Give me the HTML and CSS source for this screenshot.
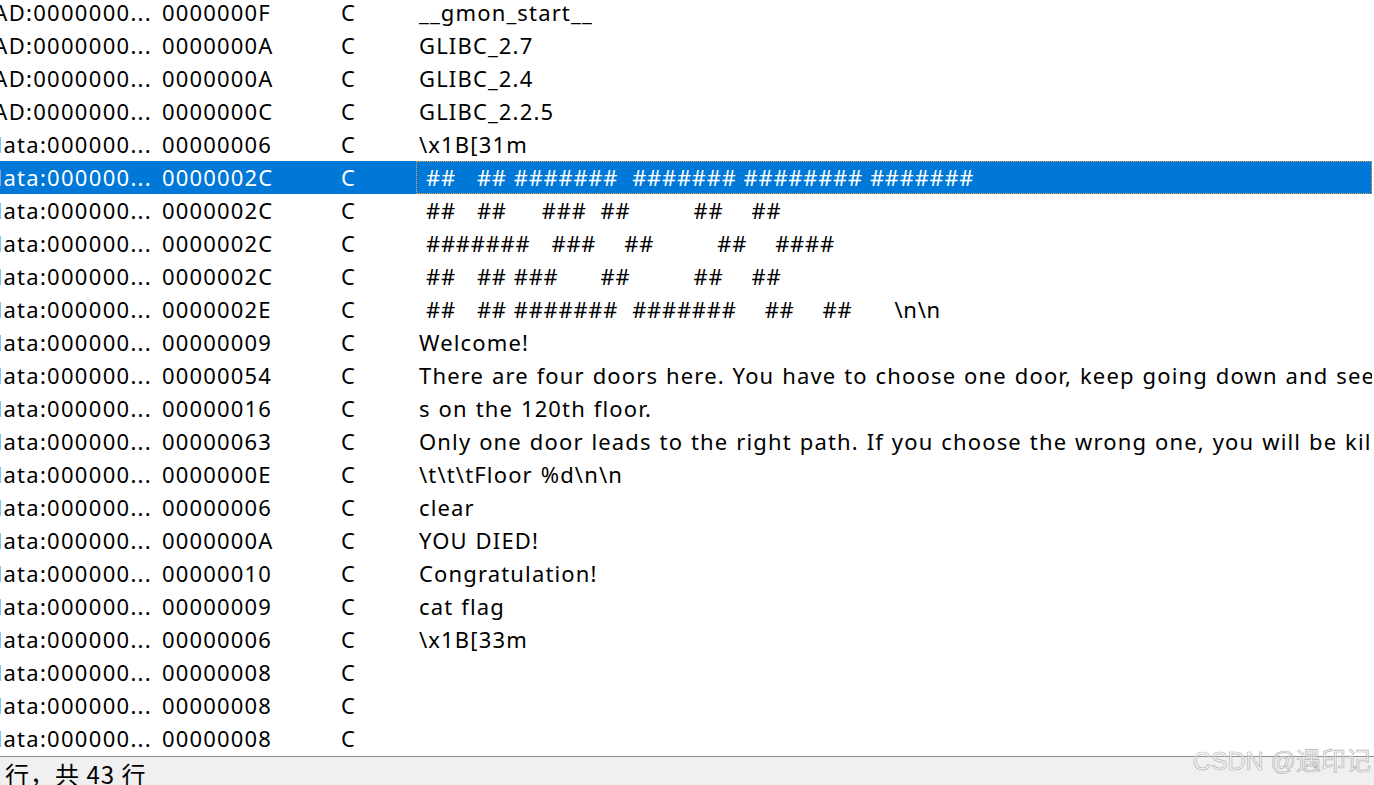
FILE: index.html
```html
<!DOCTYPE html>
<html>
<head>
<meta charset="utf-8">
<link rel="stylesheet" href="styles.css">
</head>
<body>
<div class="window">
  <div class="table">
    <div class="row"><div class="c addr"><span>LOAD:0000000...</span></div><div class="c len">0000000F</div><div class="c type">C</div><div class="c str">__gmon_start__</div></div>
    <div class="row"><div class="c addr"><span>LOAD:0000000...</span></div><div class="c len">0000000A</div><div class="c type">C</div><div class="c str">GLIBC_2.7</div></div>
    <div class="row"><div class="c addr"><span>LOAD:0000000...</span></div><div class="c len">0000000A</div><div class="c type">C</div><div class="c str">GLIBC_2.4</div></div>
    <div class="row"><div class="c addr"><span>LOAD:0000000...</span></div><div class="c len">0000000C</div><div class="c type">C</div><div class="c str">GLIBC_2.2.5</div></div>
    <div class="row"><div class="c addr"><span>.rodata:000000...</span></div><div class="c len">00000006</div><div class="c type">C</div><div class="c str">\x1B[31m</div></div>
    <div class="row selected"><div class="c addr"><span>.rodata:000000...</span></div><div class="c len">0000002C</div><div class="c type">C</div><div class="c str hash focus"> ##   ## #######  ####### ######## #######</div></div>
    <div class="row"><div class="c addr"><span>.rodata:000000...</span></div><div class="c len">0000002C</div><div class="c type">C</div><div class="c str hash"> ##   ##     ###  ##         ##    ##</div></div>
    <div class="row"><div class="c addr"><span>.rodata:000000...</span></div><div class="c len">0000002C</div><div class="c type">C</div><div class="c str hash"> #######   ###    ##         ##    ####</div></div>
    <div class="row"><div class="c addr"><span>.rodata:000000...</span></div><div class="c len">0000002C</div><div class="c type">C</div><div class="c str hash"> ##   ## ###      ##         ##    ##</div></div>
    <div class="row"><div class="c addr"><span>.rodata:000000...</span></div><div class="c len">0000002E</div><div class="c type">C</div><div class="c str hash"> ##   ## #######  #######    ##    ##      \n\n</div></div>
    <div class="row"><div class="c addr"><span>.rodata:000000...</span></div><div class="c len">00000009</div><div class="c type">C</div><div class="c str">Welcome!</div></div>
    <div class="row"><div class="c addr"><span>.rodata:000000...</span></div><div class="c len">00000054</div><div class="c type">C</div><div class="c str">There are four doors here. You have to choose one door, keep going down and see what happen</div></div>
    <div class="row"><div class="c addr"><span>.rodata:000000...</span></div><div class="c len">00000016</div><div class="c type">C</div><div class="c str">s on the 120th floor.</div></div>
    <div class="row"><div class="c addr"><span>.rodata:000000...</span></div><div class="c len">00000063</div><div class="c type">C</div><div class="c str">Only one door leads to the right path. If you choose the wrong one, you will be killed.</div></div>
    <div class="row"><div class="c addr"><span>.rodata:000000...</span></div><div class="c len">0000000E</div><div class="c type">C</div><div class="c str">\t\t\tFloor %d\n\n</div></div>
    <div class="row"><div class="c addr"><span>.rodata:000000...</span></div><div class="c len">00000006</div><div class="c type">C</div><div class="c str">clear</div></div>
    <div class="row"><div class="c addr"><span>.rodata:000000...</span></div><div class="c len">0000000A</div><div class="c type">C</div><div class="c str">YOU DIED!</div></div>
    <div class="row"><div class="c addr"><span>.rodata:000000...</span></div><div class="c len">00000010</div><div class="c type">C</div><div class="c str">Congratulation!</div></div>
    <div class="row"><div class="c addr"><span>.rodata:000000...</span></div><div class="c len">00000009</div><div class="c type">C</div><div class="c str">cat flag</div></div>
    <div class="row"><div class="c addr"><span>.rodata:000000...</span></div><div class="c len">00000006</div><div class="c type">C</div><div class="c str">\x1B[33m</div></div>
    <div class="row"><div class="c addr"><span>.rodata:000000...</span></div><div class="c len">00000008</div><div class="c type">C</div><div class="c str"></div></div>
    <div class="row"><div class="c addr"><span>.rodata:000000...</span></div><div class="c len">00000008</div><div class="c type">C</div><div class="c str"></div></div>
    <div class="row"><div class="c addr"><span>.rodata:000000...</span></div><div class="c len">00000008</div><div class="c type">C</div><div class="c str"></div></div>
  </div>
  <div class="status">行，共 43 行</div>
  <div class="watermark">CSDN @遇印记</div>
</div>
</body>
</html>
```

FILE: styles.css
```css
html, body {
  margin: 0;
  padding: 0;
  background: #ffffff;
  overflow: hidden;
}

.window {
  position: relative;
  width: 1374px;
  height: 785px;
  overflow: hidden;
  display: flex;
  flex-direction: column;
  font-family: "Noto Sans", "Open Sans", sans-serif;
  font-size: 22px;
  letter-spacing: 1.15px;
  color: #000;
}

.table {
  margin-top: -4px;
  width: 1372px;
  display: flex;
  flex-direction: column;
}

.row {
  display: grid;
  grid-template-columns: 156px 182px 78px 956px;
  height: 33px;
  line-height: 33px;
}

.c {
  white-space: pre;
  overflow: hidden;
}

.addr {
  display: flex;
  justify-content: flex-end;
  padding-right: 4px;
}

.addr span {
  letter-spacing: 1.3px;
}

.len {
  padding-left: 6px;
}

.type {
  padding-left: 3px;
}

.str {
  padding-left: 3px;
  box-sizing: border-box;
  word-spacing: 1px;
}

.str.hash {
  letter-spacing: 0.7px;
  word-spacing: 0.6px;
}

.selected {
  background: #0078d7;
  color: #ffffff;
}

.focus {
  outline: 1px dotted #f0a040;
  outline-offset: -1px;
}

.status {
  margin-top: 1px;
  flex: 1;
  border-top: 1px solid #8c8c9c;
  background: #f0f0f0;
  font-family: "Noto Sans CJK SC", "Noto Sans", sans-serif;
  font-size: 24px;
  letter-spacing: 1px;
  line-height: 30px;
  padding-left: 5px;
  padding-top: 2px;
}

.watermark {
  position: absolute;
  right: 3px;
  bottom: 8px;
  font-family: "Liberation Sans", "Noto Sans CJK SC", sans-serif;
  font-size: 25px;
  letter-spacing: 0;
  color: rgba(255, 255, 255, 0.5);
  -webkit-text-stroke: 0.7px #b4b4b4;
}
```
